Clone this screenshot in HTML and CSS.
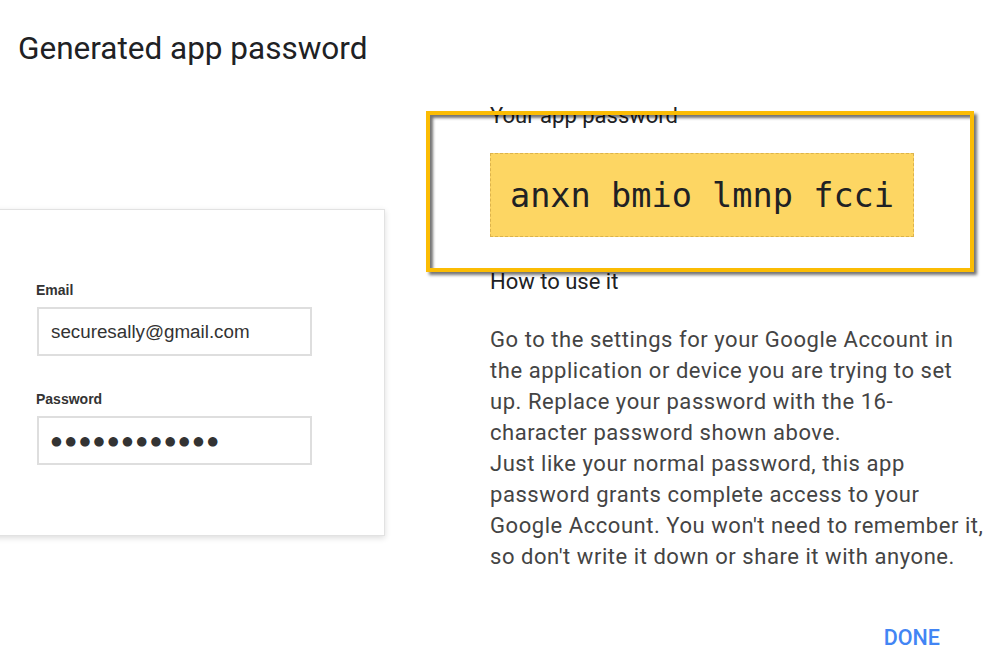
FILE: index.html
```html
<!DOCTYPE html>
<html lang="en">
<head>
    <meta charset="UTF-8">
    <meta name="viewport" content="width=device-width, initial-scale=1.0">
    <title>Generated app password</title>
    <link rel="stylesheet" href="styles.css">
</head>
<body>
    <div class="dialog">
        <h1 class="dialog-title">Generated app password</h1>

        <div class="dialog-body">
            <!-- Example sign-in form -->
            <div class="preview">
                <div class="signin-card">
                    <label class="field-label">Email</label>
                    <div class="field-input">securesally@gmail.com</div>

                    <label class="field-label field-label-second">Password</label>
                    <div class="field-input field-dots">●●●●●●●●●●●●</div>
                </div>
            </div>

            <div class="info">
                <p class="info-heading">Your app password</p>
                <div class="password-wrap">
                    <div class="password-box">anxn bmio lmnp fcci</div>
                    <div class="highlight"></div>
                </div>

                <p class="info-heading how-to">How to use it</p>
                <p class="info-text">
                    Go to the settings for your Google Account in the application or device you are trying to set up. Replace your password with the 16-character password shown above.<br>
                    Just like your normal password, this app password grants complete access to your Google Account. You won't need to remember it, so don't write it down or share it with anyone.
                </p>
            </div>
        </div>

        <div class="dialog-actions">
            <button class="btn-done">DONE</button>
        </div>
    </div>
</body>
</html>
```

FILE: styles.css
```css
* {
    margin: 0;
    padding: 0;
    box-sizing: border-box;
}

body {
    font-family: Roboto, "Liberation Sans", Arial, sans-serif;
    background-color: #fff;
    color: #202124;
    overflow: hidden;
}

.dialog {
    width: 993px;
    height: 663px;
}

.dialog-title {
    font-size: 31.5px;
    font-weight: 400;
    line-height: 36px;
    padding: 31px 0 0 18px;
    color: #202124;
}

.dialog-body {
    display: flex;
    align-items: flex-start;
    gap: 105px;
}

/* left side: picture of a sign-in form */
.preview {
    margin-left: -20px;
    margin-top: 142px;
}

.signin-card {
    width: 405px;
    background: #fff;
    border: 1px solid #e2e2e2;
    box-shadow: 0 2px 6px rgba(0, 0, 0, 0.14);
    padding: 72px 0 70px 55px;
    font-family: "Liberation Sans", Arial, sans-serif;
}

.field-label {
    display: block;
    font-size: 14px;
    font-weight: bold;
    line-height: 16px;
    color: #333;
}

.field-label-second {
    margin-top: 35px;
}

.field-input {
    width: 275px;
    height: 49px;
    margin: 9px 0 0 1px;
    border: 2px solid #dedede;
    padding-left: 12px;
    font-size: 18.8px;
    line-height: 45px;
    color: #333;
}

.field-dots {
    font-family: "DejaVu Sans", sans-serif;
    font-size: 12.5px;
    letter-spacing: 3.3px;
    color: #333;
}

/* right side */
.info {
    width: 500px;
    padding-top: 35px;
}

.info-heading {
    font-size: 22px;
    line-height: 28px;
    color: #202124;
}

.password-wrap {
    position: relative;
    margin-top: 23px;
}

.password-box {
    display: inline-block;
    width: 424px;
    height: 84px;
    background: #fdd663;
    border: 1px dashed #dcb34c;
    text-align: center;
    font-family: "DejaVu Sans Mono", monospace;
    font-size: 33.6px;
    line-height: 84px;
    color: #202124;
    vertical-align: top;
}

/* annotation frame drawn over the password */
.highlight {
    position: absolute;
    left: -64px;
    top: -42px;
    width: 548px;
    height: 161px;
    border: 4px solid #fbbc04;
    box-shadow: 3px 3px 3px rgba(0, 0, 0, 0.55), inset 3px 3px 3px rgba(0, 0, 0, 0.55);
    pointer-events: none;
}

.how-to {
    margin-top: 31px;
}

.info-text {
    margin-top: 28px;
    font-size: 22px;
    letter-spacing: 0.55px;
    line-height: 31px;
    color: #444;
}

.dialog-actions {
    display: flex;
    justify-content: flex-end;
    padding: 52px 45px 0 0;
}

.btn-done {
    background: none;
    border: none;
    padding: 0 8px;
    font-family: Roboto, sans-serif;
    font-size: 21.5px;
    font-weight: 500;
    line-height: 28px;
    color: #4285f4;
    cursor: pointer;
}
```
